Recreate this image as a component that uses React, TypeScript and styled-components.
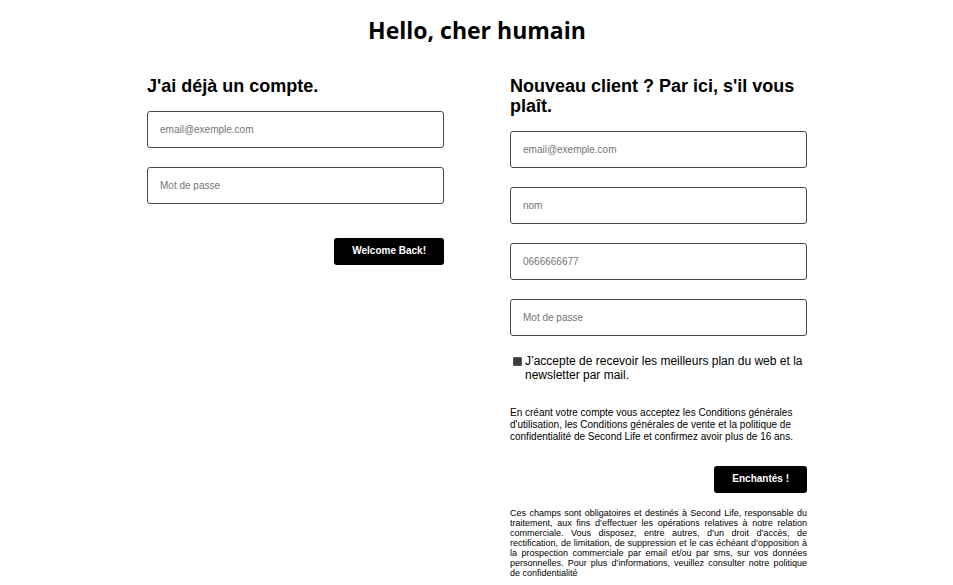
import React from "react";
import styled, { createGlobalStyle } from "styled-components";

const GlobalStyle = createGlobalStyle`
  *, *::before, *::after { box-sizing: border-box; }
  body {
    margin: 0;
    background: #fff;
    color: #000;
    font-family: "Liberation Sans", Arial, sans-serif;
  }
`;

const Page = styled.main`
  padding: 14px 23px 0 24px;
`;

const Title = styled.h1`
  margin: 0;
  text-align: center;
  font: 700 23px/32px "Open Sans", "Noto Sans", sans-serif;
`;

const Columns = styled.div`
  display: grid;
  grid-template-columns: minmax(0, 297px) minmax(0, 297px);
  justify-content: center;
  align-items: start;
  column-gap: 66px;
  margin-top: 30px;
`;

const Form = styled.form`
  display: flex;
  flex-direction: column;
`;

const Heading = styled.h2`
  margin: 0 0 15px;
  font-size: 18px;
  line-height: 20px;
`;

const Fields = styled.div`
  display: flex;
  flex-direction: column;
  gap: 19px;
`;

const Field = styled.input`
  width: 100%;
  height: 37px;
  padding: 0 12px;
  border: 1px solid #484848;
  border-radius: 3px;
  background: #fff;
  font: 10px "Liberation Sans", Arial, sans-serif;
  &::placeholder { color: #757575; opacity: 1; }
`;

const Submit = styled.button<{ $gap: number }>`
  align-self: flex-end;
  height: 27px;
  margin-top: ${(p) => p.$gap}px;
  padding: 0 18px 2px;
  border: 0;
  border-radius: 3px;
  background: #000;
  color: #fff;
  font: 700 10px "Liberation Sans", Arial, sans-serif;
`;

const Consent = styled.label`
  display: flex;
  align-items: flex-start;
  gap: 3px;
  margin-top: 18px;
  padding-left: 3px;
  font-size: 12px;
  line-height: 14px;
`;

const Check = styled.input`
  appearance: none;
  flex: none;
  width: 9px;
  height: 9px;
  margin: 3px 0 0;
  border: 1px solid #555;
  border-radius: 1px;
  background: #3b3b3b;
  &:checked { background: #000; }
`;

const Terms = styled.p`
  margin: 25px 0 0;
  font-size: 10px;
  line-height: 12px;
`;

const Legal = styled.p`
  margin: 15px 0 0;
  font-size: 9px;
  line-height: 10px;
  text-align: justify;
`;

export default function App() {
  return (
    <>
      <GlobalStyle />
      <Page>
        <Title>Hello, cher humain</Title>
        <Columns>
          <Form>
            <Heading>J'ai déjà un compte.</Heading>
            <Fields>
              <Field type="email" aria-label="Email" placeholder="email@exemple.com" />
              <Field type="password" aria-label="Mot de passe" placeholder="Mot de passe" />
            </Fields>
            <Submit type="submit" $gap={34}>Welcome Back!</Submit>
          </Form>
          <Form>
            <Heading>Nouveau client ? Par ici, s'il vous plaît.</Heading>
            <Fields>
              <Field type="email" aria-label="Email" placeholder="email@exemple.com" />
              <Field type="text" aria-label="Nom" placeholder="nom" />
              <Field type="tel" aria-label="Téléphone" placeholder="0666666677" />
              <Field type="password" aria-label="Mot de passe" placeholder="Mot de passe" />
            </Fields>
            <Consent>
              <Check type="checkbox" />
              <span>J’accepte de recevoir les meilleurs plan du web et la newsletter par mail.</span>
            </Consent>
            <Terms>
              En créant votre compte vous acceptez les Conditions générales d'utilisation, les Conditions
              générales de vente et la politique de confidentialité de Second Life et confirmez avoir plus de 16 ans.
            </Terms>
            <Submit type="submit" $gap={23}>Enchantés !</Submit>
            <Legal>
              Ces champs sont obligatoires et destinés à Second Life, responsable du traitement, aux fins
              d’effectuer les opérations relatives à notre relation commerciale. Vous disposez, entre autres, d’un
              droit d’accès, de rectification, de limitation, de suppression et le cas échéant d’opposition à la
              prospection commerciale par email et/ou par sms, sur vos données personnelles. Pour plus
              d’informations, veuillez consulter notre politique de confidentialité
            </Legal>
          </Form>
        </Columns>
      </Page>
    </>
  );
}
